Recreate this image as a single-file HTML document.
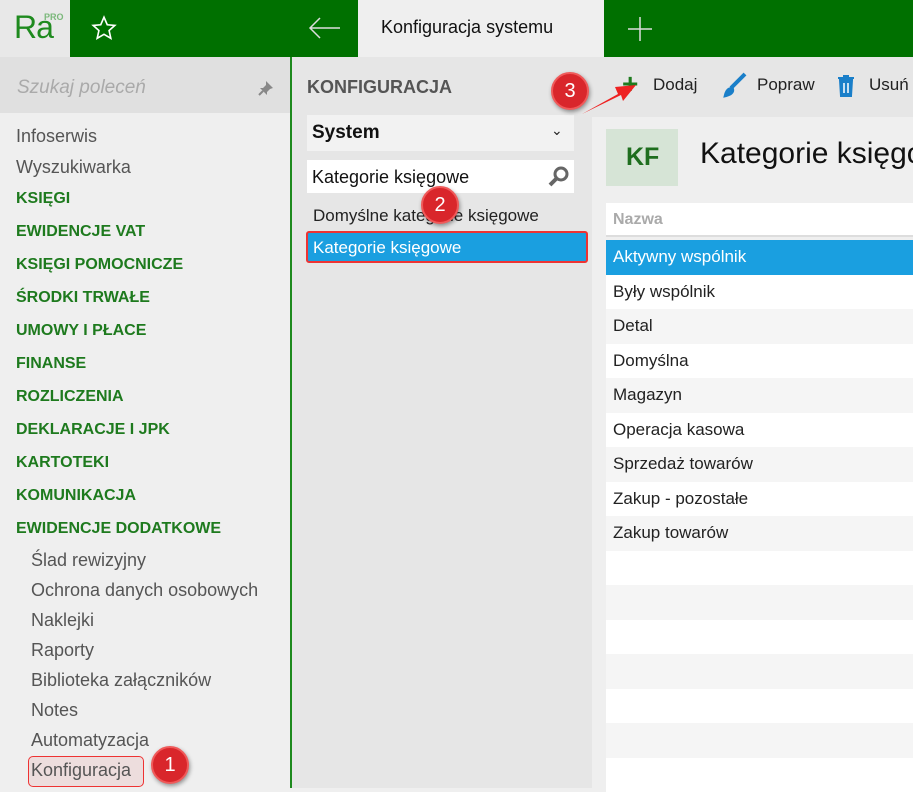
<!DOCTYPE html><html><head><meta charset="utf-8"><style>
*{margin:0;padding:0;box-sizing:border-box}
body{width:913px;height:788px;overflow:hidden;font-family:"Liberation Sans",sans-serif;background:#efefef;position:relative}
.a{position:absolute;white-space:nowrap}
.g{color:#1e7a1e;font-weight:bold;font-size:16px}
.n{color:#555;font-size:18px}
.s{color:#555;font-size:18px;left:31px}
.badge{position:absolute;width:38px;height:38px;border-radius:50%;background:#d9262b;border:2px solid #f05a5a;color:#fff;font-size:20px;text-align:center;line-height:34px;box-shadow:1px 2px 4px rgba(0,0,0,.4)}
.row{position:absolute;left:606px;width:307px;height:34.5px;font-size:17px;color:#222;padding-left:7px;line-height:34px}
</style></head><body>
<div class="a" style="left:0;top:0;width:70px;height:57px;background:#e8e8e8"></div>
<div class="a" style="left:14px;top:9px;font-size:32px;color:#1e8a1e;letter-spacing:-1px">Ra</div>
<div class="a" style="left:44px;top:12px;font-size:9px;color:#7ab87a;font-weight:bold">PRO</div>
<div class="a" style="left:70px;top:0;width:288px;height:57px;background:#007000"></div>
<svg class="a" style="left:91px;top:15px" width="26" height="26" viewBox="0 0 24 24"><path d="M12 2l3 7 7 .6-5.3 4.7 1.6 7.2L12 17.8 5.7 21.5l1.6-7.2L2 9.6 9 9z" fill="none" stroke="#fff" stroke-width="1.5"/></svg>
<svg class="a" style="left:307px;top:16px" width="34" height="24"><path d="M33 12H3M13 2L3 12l10 10" fill="none" stroke="#ddd" stroke-width="1.5"/></svg>
<div class="a" style="left:358px;top:0;width:246px;height:57px;background:#efefef"></div>
<div class="a" style="left:381px;top:17px;font-size:18px;color:#111">Konfiguracja systemu</div>
<div class="a" style="left:604px;top:0;width:309px;height:57px;background:#007000"></div>
<svg class="a" style="left:627px;top:16px" width="26" height="26"><path d="M13 1v24M1 13h24" stroke="#ddd" stroke-width="1.5"/></svg>
<div class="a" style="left:0;top:57px;width:290px;height:56px;background:#e0e0e0"></div>
<div class="a" style="left:17px;top:77px;font-size:19px;color:#aaa;font-style:italic">Szukaj poleceń</div>
<svg class="a" style="left:257px;top:79px" width="18" height="18"><path d="M9 2l7 7-3 1-3 3 0 3-7-7 3 0 3-3z" fill="#888"/><path d="M6 12l-4 4" stroke="#888" stroke-width="2"/></svg>
<div class="a" style="left:290px;top:57px;width:2px;height:731px;background:#1e8a1e"></div>
<div class="a" style="left:292px;top:57px;width:300px;height:731px;background:#e6e6e6"></div>
<div class="a n" style="left:16px;top:126px">Infoserwis</div>
<div class="a n" style="left:16px;top:157px">Wyszukiwarka</div>
<div class="a g" style="left:16px;top:190px">KSIĘGI</div>
<div class="a g" style="left:16px;top:223px">EWIDENCJE VAT</div>
<div class="a g" style="left:16px;top:256px">KSIĘGI POMOCNICZE</div>
<div class="a g" style="left:16px;top:289px">ŚRODKI TRWAŁE</div>
<div class="a g" style="left:16px;top:322px">UMOWY I PŁACE</div>
<div class="a g" style="left:16px;top:355px">FINANSE</div>
<div class="a g" style="left:16px;top:388px">ROZLICZENIA</div>
<div class="a g" style="left:16px;top:421px">DEKLARACJE I JPK</div>
<div class="a g" style="left:16px;top:454px">KARTOTEKI</div>
<div class="a g" style="left:16px;top:487px">KOMUNIKACJA</div>
<div class="a g" style="left:16px;top:520px">EWIDENCJE DODATKOWE</div>
<div class="a s" style="top:550px">Ślad rewizyjny</div>
<div class="a s" style="top:580px">Ochrona danych osobowych</div>
<div class="a s" style="top:610px">Naklejki</div>
<div class="a s" style="top:640px">Raporty</div>
<div class="a s" style="top:670px">Biblioteka załączników</div>
<div class="a s" style="top:700px">Notes</div>
<div class="a s" style="top:730px">Automatyzacja</div>
<div class="a" style="left:28px;top:756px;width:116px;height:31px;border:1.5px solid #e33;border-radius:5px;background:rgba(230,150,150,.2)"></div>
<div class="a s" style="top:760px">Konfiguracja</div>
<div class="badge" style="left:151px;top:746px">1</div>
<div class="a" style="left:307px;top:77px;font-size:18px;font-weight:bold;color:#555">KONFIGURACJA</div>
<div class="a" style="left:307px;top:115px;width:267px;height:36px;background:#f2f2f2"></div>
<div class="a" style="left:312px;top:122px;font-size:19px;font-weight:bold;color:#111">System</div>
<div class="a" style="left:551px;top:122px;font-size:14px;color:#222">⌄</div>
<div class="a" style="left:307px;top:160px;width:267px;height:33px;background:#fff"></div>
<div class="a" style="left:312px;top:167px;font-size:18px;color:#111">Kategorie księgowe</div>
<svg class="a" style="left:547px;top:165px" width="24" height="24"><circle cx="14" cy="9" r="6" fill="none" stroke="#666" stroke-width="3"/><path d="M10 13L3 20" stroke="#666" stroke-width="4"/></svg>
<div class="a" style="left:313px;top:206px;font-size:17px;color:#222">Domyślne kategorie księgowe</div>
<div class="a" style="left:306px;top:231px;width:282px;height:32px;background:#1a9fe0;border:2px solid #e33;border-radius:3px"></div>
<div class="a" style="left:313px;top:238px;font-size:17px;color:#fff">Kategorie księgowe</div>
<div class="badge" style="left:421px;top:186px">2</div>
<div class="a" style="left:592px;top:57px;width:321px;height:60px;background:#e6e6e6"></div>
<div class="a" style="left:622px;top:70px;font-size:28px;color:#1e7a1e;font-weight:bold;line-height:28px">+</div>
<div class="a" style="left:653px;top:75px;font-size:17px;color:#222">Dodaj</div>
<svg class="a" style="left:721px;top:72px" width="26" height="26"><path d="M24 2L10 16M11 17c-3 0-5 2-6 6 4-1 7-3 6-6z" stroke="#1a7fc9" stroke-width="4" fill="#1a7fc9"/></svg>
<div class="a" style="left:757px;top:75px;font-size:17px;color:#222">Popraw</div>
<svg class="a" style="left:836px;top:74px" width="20" height="24"><path d="M2 4h16M7 2h6M4 6h12l-1 16H5z" fill="#1a7fc9" stroke="#1a7fc9" stroke-width="2"/><path d="M8 9v10M12 9v10" stroke="#fff" stroke-width="1.5"/></svg>
<div class="a" style="left:869px;top:75px;font-size:17px;color:#222">Usuń</div>
<svg class="a" style="left:578px;top:78px" width="70" height="40"><path d="M4 36L40 16l-3-7 21-2-13 16-2-6z" fill="#e22"/></svg>
<div class="badge" style="left:551px;top:72px">3</div>
<div class="a" style="left:606px;top:129px;width:72px;height:57px;background:#d6e4d6"></div>
<div class="a" style="left:626px;top:143px;font-size:25px;color:#1e6e1e;font-weight:bold">KF</div>
<div class="a" style="left:700px;top:137px;font-size:30px;color:#111">Kategorie księgowe</div>
<div class="a" style="left:606px;top:203px;width:307px;height:34px;background:#fff;border-bottom:2px solid #ddd"></div>
<div class="a" style="left:613px;top:211px;font-size:16px;color:#aaa;font-weight:bold">Nazwa</div>
<div class="row" style="top:240px;background:#1a9fe0;color:#fff">Aktywny wspólnik</div>
<div class="row" style="top:274.5px;background:#fff">Były wspólnik</div>
<div class="row" style="top:309px;background:#f5f5f5">Detal</div>
<div class="row" style="top:343.5px;background:#fff">Domyślna</div>
<div class="row" style="top:378px;background:#f5f5f5">Magazyn</div>
<div class="row" style="top:412.5px;background:#fff">Operacja kasowa</div>
<div class="row" style="top:447px;background:#f5f5f5">Sprzedaż towarów</div>
<div class="row" style="top:481.5px;background:#fff">Zakup - pozostałe</div>
<div class="row" style="top:516px;background:#f5f5f5">Zakup towarów</div>
<div class="row" style="top:550.5px;background:#fff"></div>
<div class="row" style="top:585px;background:#f5f5f5"></div>
<div class="row" style="top:619.5px;background:#fff"></div>
<div class="row" style="top:654px;background:#f5f5f5"></div>
<div class="row" style="top:688.5px;background:#fff"></div>
<div class="row" style="top:723px;background:#f5f5f5"></div>
<div class="row" style="top:757.5px;background:#fff"></div>
</body></html>
